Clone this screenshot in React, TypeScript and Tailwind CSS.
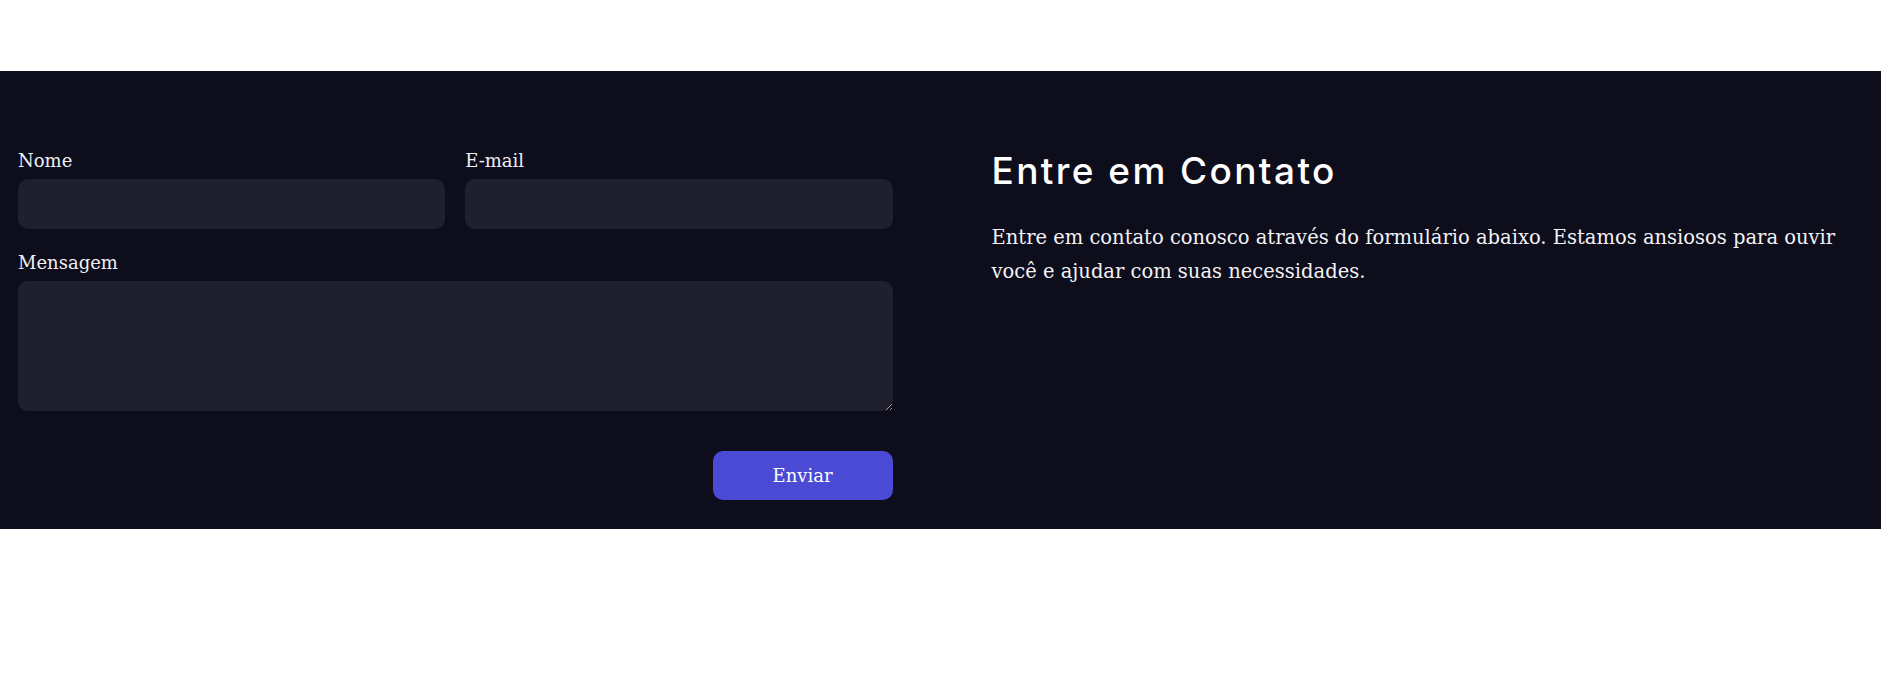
import React from 'react';

const serif = "font-['DejaVu_Serif',serif]";

const ContactSection: React.FC = () => {
  return (
    <section className="w-[1881px] h-[458px] bg-[#0d0d1c] px-[18px] pt-20">
      <div className="grid grid-cols-2 gap-24">
        <form className={`flex flex-col ${serif}`} onSubmit={(e) => e.preventDefault()}>
          <div className="grid grid-cols-2 gap-5">
            <div className="flex flex-col">
              <label className="mb-2 text-[18px] leading-5 text-[#f0f0f4]">Nome</label>
              <input
                type="text"
                className="h-[50px] rounded-[10px] bg-[#201f2e] px-4 text-white outline-none"
              />
            </div>
            <div className="flex flex-col">
              <label className="mb-2 text-[18px] leading-5 text-[#f0f0f4]">E-mail</label>
              <input
                type="email"
                className="h-[50px] rounded-[10px] bg-[#201f2e] px-4 text-white outline-none"
              />
            </div>
          </div>
          <div className="mt-6 flex flex-col">
            <label className="mb-2 text-[18px] leading-5 text-[#f0f0f4]">Mensagem</label>
            <textarea className="h-[130px] rounded-[10px] bg-[#201f2e] px-4 py-3 text-white outline-none" />
          </div>
          <div className="mt-10 flex justify-end">
            <button
              type="submit"
              className="h-[49px] w-[180px] rounded-[10px] bg-[#4a4ad4] text-[18px] text-white"
            >
              Enviar
            </button>
          </div>
        </form>
        <div className="pl-[3px]">
          <h2 className="font-['Inter',sans-serif] text-[37px] leading-10 font-medium tracking-[2.4px] text-white">
            Entre em Contato
          </h2>
          <p className={`mt-[30px] text-[19.5px] leading-[34px] text-[#f3f3f6] ${serif}`}>
            Entre em contato conosco através do formulário abaixo. Estamos ansiosos para ouvir
            você e ajudar com suas necessidades.
          </p>
        </div>
      </div>
    </section>
  );
};

export default function App() {
  return (
    <div className="min-h-[683px] bg-white">
      <div className="h-[71px]" />
      <ContactSection />
    </div>
  );
}
